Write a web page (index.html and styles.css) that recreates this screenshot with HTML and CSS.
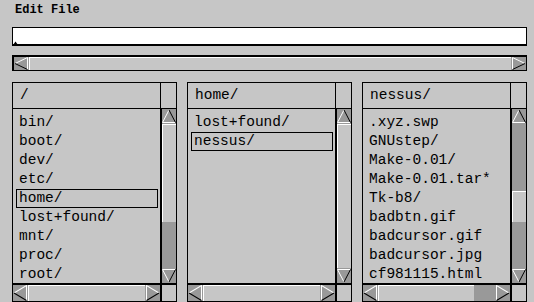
FILE: index.html
```html
<!DOCTYPE html>
<html lang="en">
<head>
    <meta charset="UTF-8">
    <title>Edit File</title>
    <link rel="stylesheet" href="styles.css">
</head>
<body>

    <div class="panel">
        <h1 class="title">Edit File</h1>
        <div class="field">
            <svg class="caret" width="5" height="4" viewBox="0 0 5 4"><path d="M0 4 L2.5 0.5 L5 4 Z"/></svg>
        </div>

        <div class="scroller horiz wide">
            <div class="btn"><svg viewBox="0 0 15 13" preserveAspectRatio="none"><path class="hi" d="M13.5 12.5 V0.5 L1 6.5"/><path class="lo" d="M1 6.5 L13.5 12.5"/></svg></div>
            <div class="track"><div class="knob" style="width: 100%"></div></div>
            <div class="btn"><svg viewBox="0 0 15 13" preserveAspectRatio="none"><path class="hi" d="M1.5 12.5 V0.5 L14 6.5"/><path class="lo" d="M14 6.5 L1.5 12.5"/></svg></div>
        </div>

        <div class="browser">
            <div class="column">
                <div class="col-head">/</div>
                <div class="col-head-box"></div>
                <ul class="list">
                    <li class="item">bin/</li>
                    <li class="item">boot/</li>
                    <li class="item">dev/</li>
                    <li class="item">etc/</li>
                    <li class="item sel">home/</li>
                    <li class="item">lost+found/</li>
                    <li class="item">mnt/</li>
                    <li class="item">proc/</li>
                    <li class="item">root/</li>
                </ul>
                <div class="scroller vert">
                    <div class="btn"><svg viewBox="0 0 14 15" preserveAspectRatio="none"><path class="hi" d="M7 1 L0.5 13.5 H13"/><path class="lo" d="M7 1 L13.5 13.5"/></svg></div>
                    <div class="track"><div class="knob" style="height: 98px"></div></div>
                    <div class="btn"><svg viewBox="0 0 14 15" preserveAspectRatio="none"><path class="hi" d="M13 1.5 H0.5 L7 14"/><path class="lo" d="M13.5 1.5 L7 14"/></svg></div>
                </div>
                <div class="scroller horiz">
                    <div class="btn"><svg viewBox="0 0 15 14" preserveAspectRatio="none"><path class="hi" d="M13.5 13.5 V0.5 L1 7"/><path class="lo" d="M1 7 L13.5 13.5"/></svg></div>
                    <div class="track"><div class="knob" style="width: 100%"></div></div>
                    <div class="btn"><svg viewBox="0 0 15 14" preserveAspectRatio="none"><path class="hi" d="M1.5 13.5 V0.5 L14 7"/><path class="lo" d="M14 7 L1.5 13.5"/></svg></div>
                </div>
                <div class="corner"></div>
            </div>

            <div class="column">
                <div class="col-head">home/</div>
                <div class="col-head-box"></div>
                <ul class="list">
                    <li class="item">lost+found/</li>
                    <li class="item sel">nessus/</li>
                </ul>
                <div class="scroller vert">
                    <div class="btn"><svg viewBox="0 0 14 15" preserveAspectRatio="none"><path class="hi" d="M7 1 L0.5 13.5 H13"/><path class="lo" d="M7 1 L13.5 13.5"/></svg></div>
                    <div class="track"><div class="knob" style="height: 100%"></div></div>
                    <div class="btn"><svg viewBox="0 0 14 15" preserveAspectRatio="none"><path class="hi" d="M13 1.5 H0.5 L7 14"/><path class="lo" d="M13.5 1.5 L7 14"/></svg></div>
                </div>
                <div class="scroller horiz">
                    <div class="btn"><svg viewBox="0 0 15 14" preserveAspectRatio="none"><path class="hi" d="M13.5 13.5 V0.5 L1 7"/><path class="lo" d="M1 7 L13.5 13.5"/></svg></div>
                    <div class="track"><div class="knob" style="width: 100%"></div></div>
                    <div class="btn"><svg viewBox="0 0 15 14" preserveAspectRatio="none"><path class="hi" d="M1.5 13.5 V0.5 L14 7"/><path class="lo" d="M14 7 L1.5 13.5"/></svg></div>
                </div>
                <div class="corner"></div>
            </div>

            <div class="column">
                <div class="col-head">nessus/</div>
                <div class="col-head-box"></div>
                <ul class="list">
                    <li class="item">.xyz.swp</li>
                    <li class="item">GNUstep/</li>
                    <li class="item">Make-0.01/</li>
                    <li class="item">Make-0.01.tar*</li>
                    <li class="item">Tk-b8/</li>
                    <li class="item">badbtn.gif</li>
                    <li class="item">badcursor.gif</li>
                    <li class="item">badcursor.jpg</li>
                    <li class="item">cf981115.html</li>
                </ul>
                <div class="scroller vert">
                    <div class="btn"><svg viewBox="0 0 14 15" preserveAspectRatio="none"><path class="hi" d="M7 1 L0.5 13.5 H13"/><path class="lo" d="M7 1 L13.5 13.5"/></svg></div>
                    <div class="track"><div class="knob" style="margin-top: 67px; height: 31px"></div></div>
                    <div class="btn"><svg viewBox="0 0 14 15" preserveAspectRatio="none"><path class="hi" d="M13 1.5 H0.5 L7 14"/><path class="lo" d="M13.5 1.5 L7 14"/></svg></div>
                </div>
                <div class="scroller horiz">
                    <div class="btn"><svg viewBox="0 0 15 14" preserveAspectRatio="none"><path class="hi" d="M13.5 13.5 V0.5 L1 7"/><path class="lo" d="M1 7 L13.5 13.5"/></svg></div>
                    <div class="track"><div class="knob" style="width: 96px"></div></div>
                    <div class="btn"><svg viewBox="0 0 15 14" preserveAspectRatio="none"><path class="hi" d="M1.5 13.5 V0.5 L14 7"/><path class="lo" d="M14 7 L1.5 13.5"/></svg></div>
                </div>
                <div class="corner"></div>
            </div>
        </div>
    </div>

</body>
</html>
```

FILE: styles.css
```css
* { margin: 0; padding: 0; box-sizing: border-box; }
html, body { overflow: hidden; }
body {
    width: 534px;
    height: 302px;
    background-color: #c6c6c6;
    color: #000;
    font-family: "Liberation Mono", "DejaVu Sans Mono", monospace;
}
.panel { padding: 0 7px 0 12px; }
.title {
    font: bold 12px/14px "Liberation Mono", monospace;
    height: 17px;
    padding: 3px 0 0 3px;
}

/* text field */
.field {
    height: 19px;
    margin-top: 10px;
    background-color: #fff;
    border: 1px solid #000;
    border-bottom-width: 2px;
}
.caret { display: block; margin-top: 13px; margin-left: 0; }
.caret path { fill: #000; }

/* scrollers */
.scroller { display: flex; background-color: #c6c6c6; }
.scroller svg { display: block; width: 100%; height: 100%; }
.scroller path { fill: none; stroke-width: 1; }
.scroller .hi { stroke: #fff; }
.scroller .lo { stroke: #000; }
.btn { background-color: #999; flex: none; }
.track { flex: 1; display: flex; background-color: #999; }
.knob {
    background-color: #c6c6c6;
    border-left: 1px solid #fff;
    border-top: 1px solid #fff;
}

.horiz { height: 16px; }
.horiz .btn { width: 15px; }
.horiz .knob { height: 100%; }
.wide {
    height: 16px;
    margin-top: 9px;
    border: 1px solid #000;
    border-top-width: 2px;
    border-left-width: 2px;
}

.vert { flex-direction: column; border-left: 2px solid #000; }
.vert .btn { height: 15px; }
.vert .track { flex-direction: column; }
.vert .knob { width: 100%; }

/* browser */
.browser { display: flex; gap: 10px; margin-top: 11px; }
.column {
    width: 165px;
    height: 220px;
    border: 1px solid #000;
    display: grid;
    grid-template-columns: 1fr 16px;
    grid-template-rows: 26px 174px 18px;
    font-size: 14.5px;
}
.col-head {
    border-bottom: 1px solid #000;
    padding-left: 7px;
    line-height: 25px;
}
.col-head-box { border-bottom: 1px solid #000; border-left: 1px solid #000; }
.list { list-style: none; padding: 4px 2px 0 3px; overflow: hidden; }
.item {
    height: 19px;
    line-height: 17px;
    padding-left: 2px;
    border: 1px solid transparent;
    white-space: nowrap;
}
.item.sel { border-color: #000; }
.column .horiz { height: 18px; border-top: 2px solid #000; }
.corner { border-top: 2px solid #000; border-left: 2px solid #000; }
```
